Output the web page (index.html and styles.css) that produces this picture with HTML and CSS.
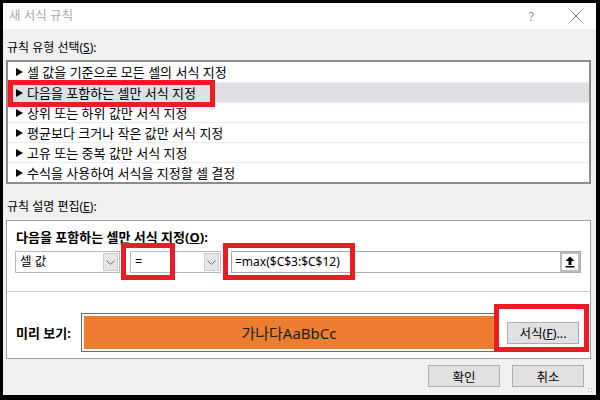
FILE: index.html
```html
<!DOCTYPE html>
<html lang="ko">
<head>
    <meta charset="UTF-8">
    <meta name="viewport" content="width=device-width, initial-scale=1.0">
    <title>새 서식 규칙</title>
    <link rel="stylesheet" href="styles.css">
</head>
<body>

    <div class="window">

        <!-- Title bar -->
        <div class="titlebar">
            <span class="title">새 서식 규칙</span>
            <span class="help">?</span>
            <svg class="close" width="12" height="12" viewBox="0 0 12 12">
                <path d="M0.5 0.5 L11.5 11.5 M11.5 0.5 L0.5 11.5" stroke="#7a7a7a" stroke-width="1" fill="none"/>
            </svg>
        </div>

        <div class="dialog-body">
            <div class="label">규칙 유형 선택(<u>S</u>):</div>

            <ul class="rule-list">
                <li><span class="arrow"></span>셀 값을 기준으로 모든 셀의 서식 지정</li>
                <li class="selected"><span class="arrow"></span>다음을 포함하는 셀만 서식 지정</li>
                <li><span class="arrow"></span>상위 또는 하위 값만 서식 지정</li>
                <li><span class="arrow"></span>평균보다 크거나 작은 값만 서식 지정</li>
                <li><span class="arrow"></span>고유 또는 중복 값만 서식 지정</li>
                <li><span class="arrow"></span>수식을 사용하여 서식을 지정할 셀 결정</li>
            </ul>

            <div class="label label-edit">규칙 설명 편집(<u>E</u>):</div>

            <div class="panel">
                <div class="panel-top">
                    <div class="panel-title">다음을 포함하는 셀만 서식 지정(<u>O</u>):</div>
                    <div class="controls">
                        <div class="combo combo-type">
                            <span class="combo-text">셀 값</span>
                            <span class="drop">
                                <svg width="9" height="5" viewBox="0 0 9 5"><path d="M0.5 0.5 L4.5 4.5 L8.5 0.5" stroke="#666" fill="none"/></svg>
                            </span>
                        </div>
                        <div class="combo combo-op">
                            <span class="combo-text">=</span>
                            <span class="drop">
                                <svg width="9" height="5" viewBox="0 0 9 5"><path d="M0.5 0.5 L4.5 4.5 L8.5 0.5" stroke="#666" fill="none"/></svg>
                            </span>
                        </div>
                        <div class="formula">
                            <span class="formula-text">=max($C$3:$C$12)</span>
                            <span class="ref-btn">
                                <svg width="10" height="12" viewBox="0 0 10 12">
                                    <path d="M5 0.5 L9.5 5 H6.5 V9 H3.5 V5 H0.5 Z" fill="#000"/>
                                    <rect x="0.5" y="10" width="9" height="1.5" fill="#000"/>
                                </svg>
                            </span>
                        </div>
                    </div>
                </div>

                <div class="panel-bottom">
                    <div class="preview-label">미리 보기:</div>
                    <div class="preview">
                        <div class="preview-fill">가나다AaBbCc</div>
                    </div>
                    <button class="btn">서식(<u>F</u>)...</button>
                </div>
            </div>

            <div class="actions">
                <button class="btn">확인</button>
                <button class="btn">취소</button>
            </div>
        </div>

        <!-- red annotation boxes drawn over the dialog -->
        <div class="mark mark-row"></div>
        <div class="mark mark-op"></div>
        <div class="mark mark-formula"></div>
        <div class="mark mark-format"></div>

        <div class="grip"></div>
    </div>

</body>
</html>
```

FILE: styles.css
```css
body {
    margin: 0;
    padding: 3px 4px 5px 3px;
    background: #000;
    font-family: 'Noto Sans', 'Noto Sans CJK KR', sans-serif;
    font-size: 12px;
    color: #000;
}

u {
    text-decoration: underline;
    text-underline-offset: 1px;
}

.window {
    position: relative;
    width: 593px;
    height: 392px;
    background: #f0f0f0;
    display: flex;
    flex-direction: column;
    overflow: hidden;
}

/* Title bar */
.titlebar {
    height: 26px;
    background: #fff;
    display: flex;
    align-items: center;
    padding-left: 6px;
    flex-shrink: 0;
}

.title {
    color: #a8a8a8;
    font-size: 12.5px;
    line-height: 16px;
    flex-grow: 1;
}

.help {
    color: #8a8a8a;
    font-size: 12px;
    margin-right: 36px;
}

.close {
    margin-right: 14px;
}

/* Body */
.dialog-body {
    padding: 0 5px 0 3px;
    display: flex;
    flex-direction: column;
}

.label {
    line-height: 16px;
    margin: 11px 0 4px 1px;
}

.label-edit {
    margin: 15px 0 5px 1px;
}

/* Rule type list */
.rule-list {
    list-style: none;
    margin: 0;
    padding: 0;
    background: #fff;
    border: 2px solid #8c8c8c;
}

.rule-list li {
    height: 20px;
    box-sizing: border-box;
    display: flex;
    align-items: center;
    padding-left: 8px;
    font-size: 13px;
    line-height: 16px;
}

.rule-list li + li {
    border-top: 1px solid #ececec;
}

.rule-list li.selected {
    background: #dfdfe4;
}

.arrow {
    width: 0;
    height: 0;
    border-left: 7px solid #000;
    border-top: 4px solid transparent;
    border-bottom: 4px solid transparent;
    margin-right: 4px;
}

/* Rule description panel */
.panel {
    background: #fff;
    border: 1px solid #a0a0a0;
}

.panel-top {
    padding: 8px 9px 18px 8px;
    border-bottom: 1px solid #c8c8c8;
}

.panel-title {
    font-weight: bold;
    font-size: 13px;
    line-height: 16px;
    padding-left: 1px;
}

.controls {
    display: flex;
    gap: 10px;
    margin-top: 6px;
}

.combo {
    height: 22px;
    box-sizing: border-box;
    border: 1px solid #b9b9b9;
    display: flex;
    align-items: center;
    justify-content: space-between;
    padding: 1px 1px 1px 4px;
}

.combo-type {
    width: 105px;
}

.combo-op {
    width: 91px;
}

.combo-text {
    line-height: 16px;
    font-size: 12.5px;
}

.drop {
    width: 15px;
    height: 18px;
    box-sizing: border-box;
    background: #e6e6e6;
    border: 1px solid #cdcdcd;
    display: flex;
    align-items: center;
    justify-content: center;
}

.formula {
    width: 350px;
    height: 22px;
    box-sizing: border-box;
    border: 1px solid #ababab;
    display: flex;
    align-items: center;
    justify-content: space-between;
    padding-left: 3px;
}

.formula-text {
    line-height: 16px;
}

.ref-btn {
    width: 20px;
    height: 20px;
    box-sizing: border-box;
    border: 2px solid #bcbcbc;
    display: flex;
    align-items: center;
    justify-content: center;
}

.panel-bottom {
    display: flex;
    align-items: center;
    padding: 21px 11px 6px 8px;
}

.preview-label {
    width: 66px;
    font-weight: bold;
    font-size: 13px;
    padding-left: 1px;
    box-sizing: border-box;
}

.preview {
    width: 416px;
    height: 39px;
    box-sizing: border-box;
    border: 1px solid #6d6d6d;
    padding: 2px;
    margin-right: 10px;
}

.preview-fill {
    height: 100%;
    background: #ed7d31;
    display: flex;
    align-items: center;
    justify-content: center;
    font-size: 15px;
    color: #1e1e1e;
}

/* Buttons */
.btn {
    width: 72px;
    height: 22px;
    background: #e1e1e1;
    border: 1px solid #adadad;
    border-radius: 0;
    font-family: inherit;
    font-size: 12.5px;
    color: #000;
    padding: 0;
}

.actions {
    display: flex;
    justify-content: flex-end;
    gap: 12px;
    margin: 6px 7px 0 0;
}

/* Annotation boxes */
.mark {
    position: absolute;
    border: 5px solid #ed1c24;
    box-sizing: border-box;
}

.mark-row {
    left: 5px;
    top: 77px;
    width: 207px;
    height: 27px;
}

.mark-op {
    left: 118px;
    top: 240px;
    width: 54px;
    height: 37px;
}

.mark-formula {
    left: 220px;
    top: 240px;
    width: 132px;
    height: 37px;
}

.mark-format {
    left: 491px;
    top: 301px;
    width: 95px;
    height: 48px;
}

.grip {
    position: absolute;
    right: 2px;
    bottom: 1px;
    width: 7px;
    height: 7px;
    background: radial-gradient(circle, #b8b8b8 0.8px, transparent 1px) 0 0 / 3px 3px;
}
```
